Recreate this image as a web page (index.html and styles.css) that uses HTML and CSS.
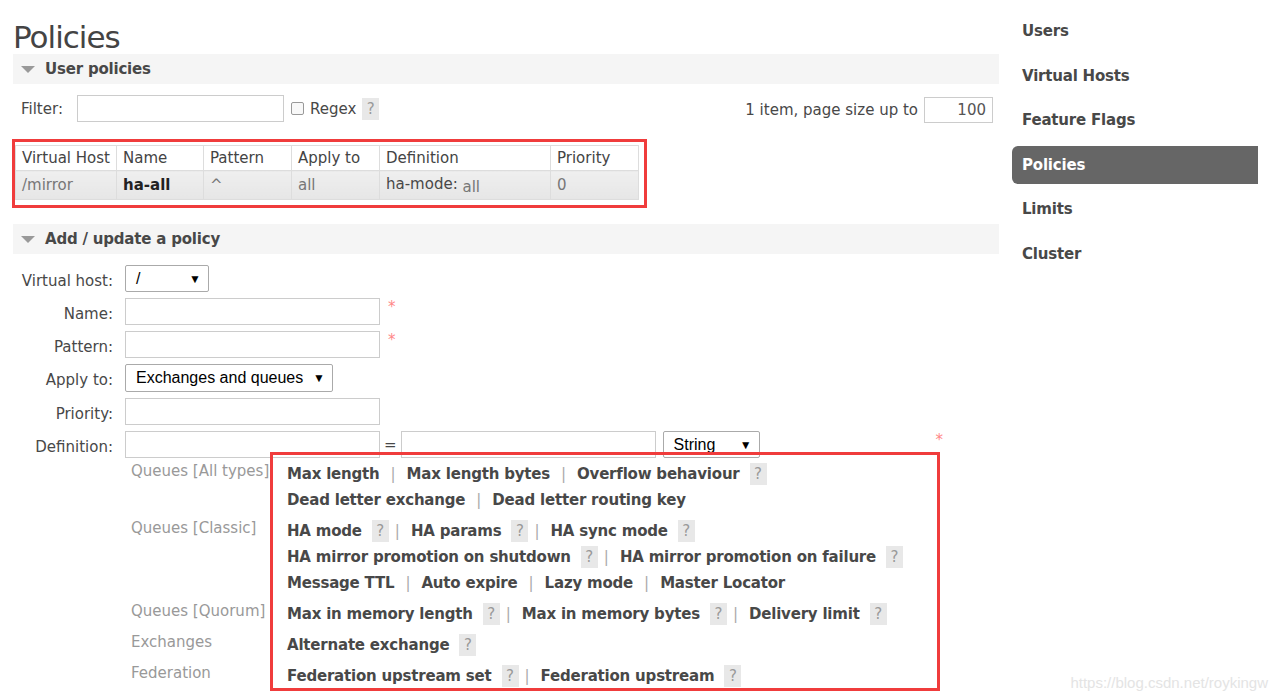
FILE: index.html
```html
<!DOCTYPE html>
<html lang="en">

<head>
    <meta charset="UTF-8">
    <meta name="viewport" content="width=device-width, initial-scale=1.0">
    <title>Policies</title>
    <link rel="stylesheet" href="styles.css">
</head>

<body>
    <div class="page">
        <div class="main">
            <h1>Policies</h1>

            <div class="section-head"><span class="arrow"></span>User policies</div>
            <div class="filter-row">
                <div class="filter-left">
                    <span class="filter-label">Filter:</span>
                    <span class="field filter-field"></span>
                    <span class="checkbox"></span>
                    <span class="regex">Regex</span>
                    <span class="help">?</span>
                </div>
                <div class="filter-right">
                    <span>1 item, page size up to</span>
                    <span class="field page-size">100</span>
                </div>
            </div>

            <div class="mark table-mark">
                <table class="list">
                    <tr>
                        <th class="c-vhost">Virtual Host</th>
                        <th class="c-name">Name</th>
                        <th class="c-pattern">Pattern</th>
                        <th class="c-apply">Apply to</th>
                        <th class="c-def">Definition</th>
                        <th class="c-prio">Priority</th>
                    </tr>
                    <tr>
                        <td>/mirror</td>
                        <td class="strong">ha-all</td>
                        <td>^</td>
                        <td>all</td>
                        <td><span class="key">ha-mode:</span> all</td>
                        <td>0</td>
                    </tr>
                </table>
            </div>

            <div class="section-head"><span class="arrow"></span>Add / update a policy</div>

            <div class="form">
                <div class="form-label">Virtual host:</div>
                <div class="form-value">
                    <div class="select vhost-select"><span>/</span><span class="caret">&#9660;</span></div>
                </div>

                <div class="form-label">Name:</div>
                <div class="form-value">
                    <span class="field wide"></span><span class="req">*</span>
                </div>

                <div class="form-label">Pattern:</div>
                <div class="form-value">
                    <span class="field wide"></span><span class="req">*</span>
                </div>

                <div class="form-label">Apply to:</div>
                <div class="form-value">
                    <div class="select apply-select"><span>Exchanges and queues</span><span class="caret">&#9660;</span></div>
                </div>

                <div class="form-label">Priority:</div>
                <div class="form-value">
                    <span class="field wide"></span>
                </div>

                <div class="form-label">Definition:</div>
                <div class="form-value">
                    <span class="field wide"></span>
                    <span class="equals">=</span>
                    <span class="field wide"></span>
                    <div class="select type-select"><span>String</span><span class="caret">&#9660;</span></div>
                    <span class="req def-req">*</span>
                </div>
            </div>

            <div class="hints">
                <div class="hint-label">Queues [All types]</div>
                <div class="hint-group">
                    <div class="hint-row">
                        <span class="link">Max length</span><span class="sep">|</span>
                        <span class="link">Max length bytes</span><span class="sep">|</span>
                        <span class="link">Overflow behaviour</span><span class="help">?</span>
                    </div>
                    <div class="hint-row">
                        <span class="link">Dead letter exchange</span><span class="sep">|</span>
                        <span class="link">Dead letter routing key</span>
                    </div>
                </div>

                <div class="hint-label">Queues [Classic]</div>
                <div class="hint-group">
                    <div class="hint-row">
                        <span class="link">HA mode</span><span class="help">?</span><span class="sep">|</span>
                        <span class="link">HA params</span><span class="help">?</span><span class="sep">|</span>
                        <span class="link">HA sync mode</span><span class="help">?</span>
                    </div>
                    <div class="hint-row">
                        <span class="link">HA mirror promotion on shutdown</span><span class="help">?</span><span class="sep">|</span>
                        <span class="link">HA mirror promotion on failure</span><span class="help">?</span>
                    </div>
                    <div class="hint-row">
                        <span class="link">Message TTL</span><span class="sep">|</span>
                        <span class="link">Auto expire</span><span class="sep">|</span>
                        <span class="link">Lazy mode</span><span class="sep">|</span>
                        <span class="link">Master Locator</span>
                    </div>
                </div>

                <div class="hint-label">Queues [Quorum]</div>
                <div class="hint-group">
                    <div class="hint-row">
                        <span class="link">Max in memory length</span><span class="help">?</span><span class="sep">|</span>
                        <span class="link">Max in memory bytes</span><span class="help">?</span><span class="sep">|</span>
                        <span class="link">Delivery limit</span><span class="help">?</span>
                    </div>
                </div>

                <div class="hint-label">Exchanges</div>
                <div class="hint-group">
                    <div class="hint-row">
                        <span class="link">Alternate exchange</span><span class="help">?</span>
                    </div>
                </div>

                <div class="hint-label">Federation</div>
                <div class="hint-group">
                    <div class="hint-row">
                        <span class="link">Federation upstream set</span><span class="help">?</span><span class="sep">|</span>
                        <span class="link">Federation upstream</span><span class="help">?</span>
                    </div>
                </div>
            </div>
        </div>

        <div class="nav">
            <a href="#">Users</a>
            <a href="#">Virtual Hosts</a>
            <a href="#">Feature Flags</a>
            <a href="#" class="active">Policies</a>
            <a href="#">Limits</a>
            <a href="#">Cluster</a>
        </div>
    </div>

    <div class="watermark">https://blog.csdn.net/roykingw</div>
</body>

</html>
```

FILE: styles.css
```css
* {
    padding: 0px;
    margin: 0px;

    box-sizing: border-box;
}

html,
body {
    width: 100%;
    height: 100%;
    background: #fff;
}

body {
    font-family: "DejaVu Sans", Verdana, sans-serif;
    font-size: 15px;
    color: #484848;
    position: relative;
    overflow: hidden;
}

.page {
    display: flex;
    padding-left: 13px;
}

.main {
    width: 986px;
}

h1 {
    font-size: 31px;
    font-weight: normal;
    letter-spacing: -1px;
    line-height: 33px;
    padding-top: 21px;
    color: #444;
}

.section-head {
    height: 30px;
    background-color: #f5f5f5;

    display: flex;
    align-items: center;

    font-weight: bold;
    letter-spacing: -0.2px;
    color: #484848;
}

.arrow {
    width: 0;
    height: 0;
    margin: 0 10px 0 8px;
    border-top: 7px solid #999;
    border-left: 7px solid transparent;
    border-right: 7px solid transparent;
}

/* filter */

.filter-row {
    display: flex;
    justify-content: space-between;
    margin-top: 10px;
    padding: 0 6px 0 8px;
}

.filter-left,
.filter-right {
    display: flex;
    align-items: center;
}

.filter-right {
    padding-top: 3px;
}

.field {
    display: inline-block;
    height: 27px;
    border: 1px solid #ccc;
    background-color: #fff;
}

.filter-field {
    width: 207px;
    height: 27px;
    margin-left: 14px;
}

.checkbox {
    width: 13px;
    height: 13px;
    margin: 0 6px 0 7px;
    border: 1px solid #999;
    border-radius: 2px;
    background-color: #f8f8f8;
}

.help {
    display: inline-block;
    width: 17px;
    height: 22px;
    line-height: 22px;
    margin-left: 6px;

    background-color: #e8e8e8;
    color: #999;
    text-align: center;
    font-weight: normal;
    letter-spacing: 0;
}

.page-size {
    width: 69px;
    height: 26px;
    margin-left: 6px;
    padding-right: 6px;
    text-align: right;
    line-height: 24px;
    color: #555;
}

/* red annotation boxes */

.mark {
    border: 3px solid #f03c3c;
}

.table-mark {
    width: fit-content;
    margin: 16px 0 16px -1px;
    padding: 3px 5px 5px 0;
}

.list {
    border-collapse: collapse;
    border: 1px solid #ddd;
}

.list th,
.list td {
    text-align: left;
    padding: 0 6px;
    border-left: 1px solid #ddd;
    white-space: nowrap;
}

.list th {
    height: 25px;
    font-weight: normal;
    color: #444;
    background-color: #fff;
}

.list td {
    height: 29px;
    color: #777;
    background: linear-gradient(#efefef, #e6e6e6);
    border-top: 1px solid #ddd;
}

.list td.strong {
    font-weight: bold;
    color: #222;
}

.list .key {
    color: #484848;
    vertical-align: 3px;
}

.c-vhost { width: 101px; }
.c-name { width: 87px; }
.c-pattern { width: 88px; }
.c-apply { width: 88px; }
.c-def { width: 171px; }
.c-prio { width: 88px; }

/* form */

.form {
    display: grid;
    grid-template-columns: 100px auto;
    column-gap: 12px;
    row-gap: 6px;
    margin-top: 11px;
    align-items: center;
}

.form-label {
    text-align: right;
    padding-top: 4px;
    color: #484848;
    white-space: nowrap;
}

.form-value {
    display: flex;
    align-items: center;
}

.wide {
    width: 255px;
}

.req {
    align-self: flex-start;
    margin-left: 8px;
    color: #f88;
    font-size: 15px;
}

.def-req {
    margin-left: 176px;
}

.equals {
    margin: 0 4px;
    color: #484848;
}

.select {
    height: 27px;
    display: flex;
    align-items: center;
    justify-content: space-between;
    padding: 0 7px 0 10px;

    border: 1px solid #aaa;
    border-radius: 2px;
    background-color: #fff;

    font-family: "Liberation Sans", Arial, sans-serif;
    font-size: 16px;
    color: #000;
}

.caret {
    font-size: 12px;
}

.vhost-select {
    width: 84px;
}

.apply-select {
    width: 208px;
    height: 28px;
}

.type-select {
    width: 97px;
    margin-left: 7px;
}

/* definition hints */

.hints {
    position: relative;
    width: 809px;
    margin: -6px 0 0 118px;
    padding: 9px 0 2px 0;

    display: grid;
    grid-template-columns: 156px auto;
    row-gap: 5px;
}

.hints::after {
    content: "";
    position: absolute;
    left: 139px;
    right: 0;
    top: 0;
    bottom: 0;
    border: 3px solid #f03c3c;
}

.hint-label {
    line-height: 20px;
    color: #999;
    white-space: nowrap;
}

.hint-row {
    height: 26px;
    display: flex;
    align-items: center;
    white-space: nowrap;
}

.link {
    font-weight: bold;
    letter-spacing: -0.2px;
    color: #484848;
}

.hint-row .help {
    margin-left: 10px;
}

.sep {
    margin: 0 11px;
    color: #aaa;
}

.help + .sep {
    margin-left: 6px;
}

/* side nav */

.nav {
    width: 246px;
    margin-left: 13px;
    padding-top: 12px;
}

.nav a {
    display: block;
    height: 38px;
    line-height: 38px;
    margin-bottom: 6.5px;
    padding-left: 10px;

    font-weight: bold;
    letter-spacing: -0.2px;
    color: #484848;
    text-decoration: none;
}

.nav a.active {
    background-color: #666;
    color: #fff;
    border-radius: 6px 0 0 6px;
}

.watermark {
    position: absolute;
    right: 12px;
    bottom: 8px;

    font-family: "Liberation Sans", Arial, sans-serif;
    font-size: 15px;
    color: #e4e4e4;
}
```
